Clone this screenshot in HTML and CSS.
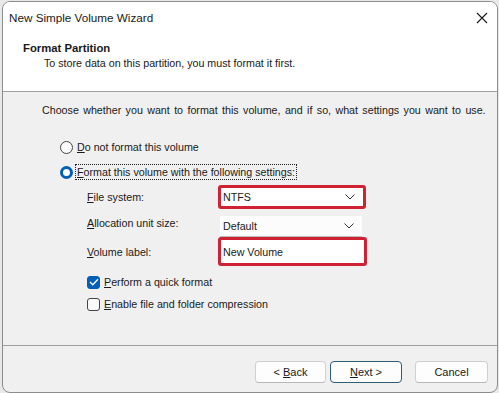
FILE: index.html
```html
<!DOCTYPE html>
<html lang="en">
<head>
  <meta charset="UTF-8" />
  <title>New Simple Volume Wizard</title>
  <link rel="stylesheet" href="styles.css">
</head>
<body>
  <div class="window">
    <div class="titlebar">
      <span class="title">New Simple Volume Wizard</span>
      <span class="close">
        <svg width="12" height="12" viewBox="0 0 12 12"><path d="M1 1 L11 11 M11 1 L1 11" stroke="#1a1a1a" stroke-width="1.1" fill="none"/></svg>
      </span>
    </div>

    <div class="header">
      <div class="head-title">Format Partition</div>
      <div class="head-sub">To store data on this partition, you must format it first.</div>
    </div>

    <div class="content">
      <p class="intro">Choose whether you want to format this volume, and if so, what settings you want to use.</p>

      <div class="option">
        <span class="radio"></span>
        <span><u>D</u>o not format this volume</span>
      </div>
      <div class="option">
        <span class="radio checked"></span>
        <span class="focus"><u>F</u>ormat this volume with the following settings:</span>
      </div>

      <div class="settings">
        <div class="row">
          <span class="label"><u>F</u>ile system:</span>
          <div class="combo marked">
            <span>NTFS</span>
            <svg class="chev" width="10" height="6" viewBox="0 0 10 6"><path d="M0.5 0.5 L5 5 L9.5 0.5" stroke="#333" fill="none"/></svg>
          </div>
        </div>
        <div class="row">
          <span class="label"><u>A</u>llocation unit size:</span>
          <div class="combo plain">
            <span>Default</span>
            <svg class="chev" width="10" height="6" viewBox="0 0 10 6"><path d="M0.5 0.5 L5 5 L9.5 0.5" stroke="#333" fill="none"/></svg>
          </div>
        </div>
        <div class="row">
          <span class="label"><u>V</u>olume label:</span>
          <div class="combo marked tall">
            <span>New Volume</span>
          </div>
        </div>

        <div class="check-row first">
          <span class="checkbox checked">
            <svg width="10" height="8" viewBox="0 0 10 8"><path d="M1 4 L3.8 6.8 L9 1.2" stroke="#fff" stroke-width="1.3" fill="none"/></svg>
          </span>
          <span><u>P</u>erform a quick format</span>
        </div>
        <div class="check-row">
          <span class="checkbox"></span>
          <span><u>E</u>nable file and folder compression</span>
        </div>
      </div>
    </div>

    <div class="footer">
      <button class="btn">&lt; <u>B</u>ack</button>
      <button class="btn default"><u>N</u>ext &gt;</button>
      <button class="btn cancel">Cancel</button>
    </div>
  </div>
</body>
</html>
```

FILE: styles.css
```css
* { box-sizing: border-box; }
body {
  margin: 0;
  background: #e9e9e9;
  font-family: "Liberation Sans", Arial, sans-serif;
  font-size: 10.7px;
  color: #1a1a1a;
}
u { text-decoration: underline; text-underline-offset: 1px; }

.window {
  width: 496px; height: 392px;
  margin: 1px 0 0 2px;
  border: 1px solid #8c8c8c;
  border-radius: 8px;
  overflow: hidden;
  background: #f0f0f0;
  display: flex; flex-direction: column;
}

.titlebar {
  height: 31px;
  background: #fff;
  display: flex; justify-content: space-between; align-items: center;
  padding: 0 9px 0 6px;
}
.title { font-size: 11.7px; color: #1a1a1a; }
.close { display: flex; }

.header {
  height: 59px;
  background: #fff;
  border-bottom: 1px solid #a0a0a0;
  padding: 9px 0 0 20px;
}
.head-title { font-weight: bold; font-size: 11.3px; }
.head-sub { padding: 3px 0 0 21px; }

.content {
  height: 254px;
  border-bottom: 1px solid #a0a0a0;
  padding: 12px 0 0 39px;
}
.intro { margin: 0 0 23px; word-spacing: 1.4px; }

.option {
  display: flex; align-items: center; gap: 4px;
  margin: 0 0 9px 18px;
  height: 16px;
}
.radio {
  width: 13px; height: 13px; border-radius: 50%;
  border: 1px solid #444; background: #fafafa;
}
.radio.checked {
  border: 3.5px solid #005fb8; background: #fff;
}
.focus { outline: 1px dotted #222; outline-offset: 1px; }

.settings { padding-left: 45px; margin-top: -4px; }
.row { display: flex; align-items: center; }
.label { width: 130px; }

.combo {
  display: flex; justify-content: space-between; align-items: center;
  width: 148px; height: 24px;
  background: #fff;
  padding: 0 8px 0 2px;
}
.combo.marked { border: 3px solid #d02233; border-radius: 3px; margin-left: 1px; }
.combo.plain {
  width: 142px; height: 21px; margin: 7px 0 0 3px;
  border-bottom: 1px solid #bdbdbd; background: #fcfcfc; padding-left: 3px;
}
.combo.tall { height: 29px; width: 149px; }

.check-row {
  display: flex; align-items: center; gap: 4px;
  height: 16px; margin-top: 6px;
}
.check-row.first { margin-top: 8px; }
.checkbox {
  width: 13px; height: 13px; border: 1px solid #444; border-radius: 3px;
  background: #fafafa; display: flex; align-items: center; justify-content: center;
}
.checkbox.checked { background: #005fb8; border-color: #005fb8; }

.footer {
  flex: 1;
  display: flex; align-items: flex-start; justify-content: flex-end;
  padding: 15px 9px 0 0;
}
.btn {
  font-family: inherit; font-size: 11px; color: #1a1a1a;
  width: 71px; height: 22px;
  background: #fdfdfd;
  border: 1px solid #d0d0d0; border-bottom-color: #b8b8b8;
  border-radius: 4px;
  margin-left: 4px;
}
.btn.default { width: 72px; border: 1px solid #2f5d76; }
.btn.cancel { margin-left: 13px; width: 73px; }
```
